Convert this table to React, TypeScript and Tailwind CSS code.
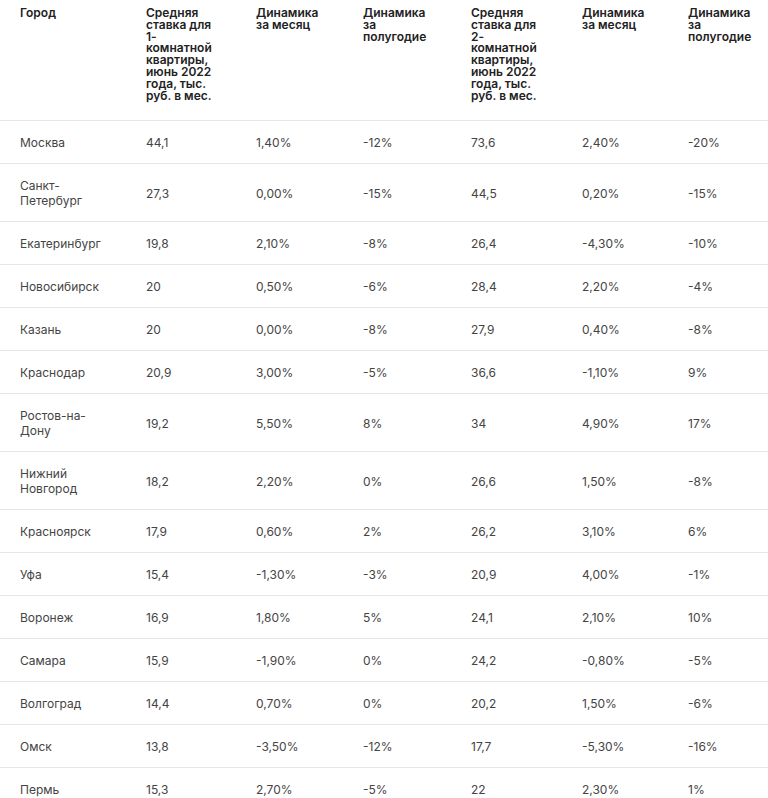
const headers = [
  "Город",
  "Средняя ставка для 1-комнатной квартиры, июнь 2022 года, тыс. руб. в мес.",
  "Динамика за месяц",
  "Динамика за полугодие",
  "Средняя ставка для 2-комнатной квартиры, июнь 2022 года, тыс. руб. в мес.",
  "Динамика за месяц",
  "Динамика за полугодие",
];

const rows: string[][] = [
  ["Москва", "44,1", "1,40%", "-12%", "73,6", "2,40%", "-20%"],
  ["Санкт-Петербург", "27,3", "0,00%", "-15%", "44,5", "0,20%", "-15%"],
  ["Екатеринбург", "19,8", "2,10%", "-8%", "26,4", "-4,30%", "-10%"],
  ["Новосибирск", "20", "0,50%", "-6%", "28,4", "2,20%", "-4%"],
  ["Казань", "20", "0,00%", "-8%", "27,9", "0,40%", "-8%"],
  ["Краснодар", "20,9", "3,00%", "-5%", "36,6", "-1,10%", "9%"],
  ["Ростов-на-Дону", "19,2", "5,50%", "8%", "34", "4,90%", "17%"],
  ["Нижний Новгород", "18,2", "2,20%", "0%", "26,6", "1,50%", "-8%"],
  ["Красноярск", "17,9", "0,60%", "2%", "26,2", "3,10%", "6%"],
  ["Уфа", "15,4", "-1,30%", "-3%", "20,9", "4,00%", "-1%"],
  ["Воронеж", "16,9", "1,80%", "5%", "24,1", "2,10%", "10%"],
  ["Самара", "15,9", "-1,90%", "0%", "24,2", "-0,80%", "-5%"],
  ["Волгоград", "14,4", "0,70%", "0%", "20,2", "1,50%", "-6%"],
  ["Омск", "13,8", "-3,50%", "-12%", "17,7", "-5,30%", "-16%"],
  ["Пермь", "15,3", "2,70%", "-5%", "22", "2,30%", "1%"],
];

const widths = ["w-[126px]", "w-[110px]", "w-[107px]", "w-[108px]", "w-[111px]", "w-[106px]", "w-[100px]"];

export default function App() {
  return (
    <div className="w-[768px] bg-white font-['Inter',sans-serif]">
      <table className="w-full table-fixed border-collapse">
        <colgroup>
          {widths.map((w, i) => (
            <col key={i} className={w} />
          ))}
        </colgroup>
        <thead>
          <tr className="border-b border-[#e6e6e6]">
            {headers.map((h, i) => (
              <th
                key={i}
                className="text-left align-top pl-[20px] pr-[20px] pt-[7px] pb-[19px] text-[12px] leading-[11.8px] font-semibold text-[#222]"
              >
                {h}
              </th>
            ))}
          </tr>
        </thead>
        <tbody>
          {rows.map((r) => (
            <tr key={r[0]} className="border-b border-[#e6e6e6]">
              {r.map((c, i) => (
                <td
                  key={i}
                  className="align-middle pl-[20px] pr-[20px] pt-[14px] pb-[13px] text-[12px] leading-[15px] text-[#444]"
                >
                  {c}
                </td>
              ))}
            </tr>
          ))}
        </tbody>
      </table>
    </div>
  );
}
